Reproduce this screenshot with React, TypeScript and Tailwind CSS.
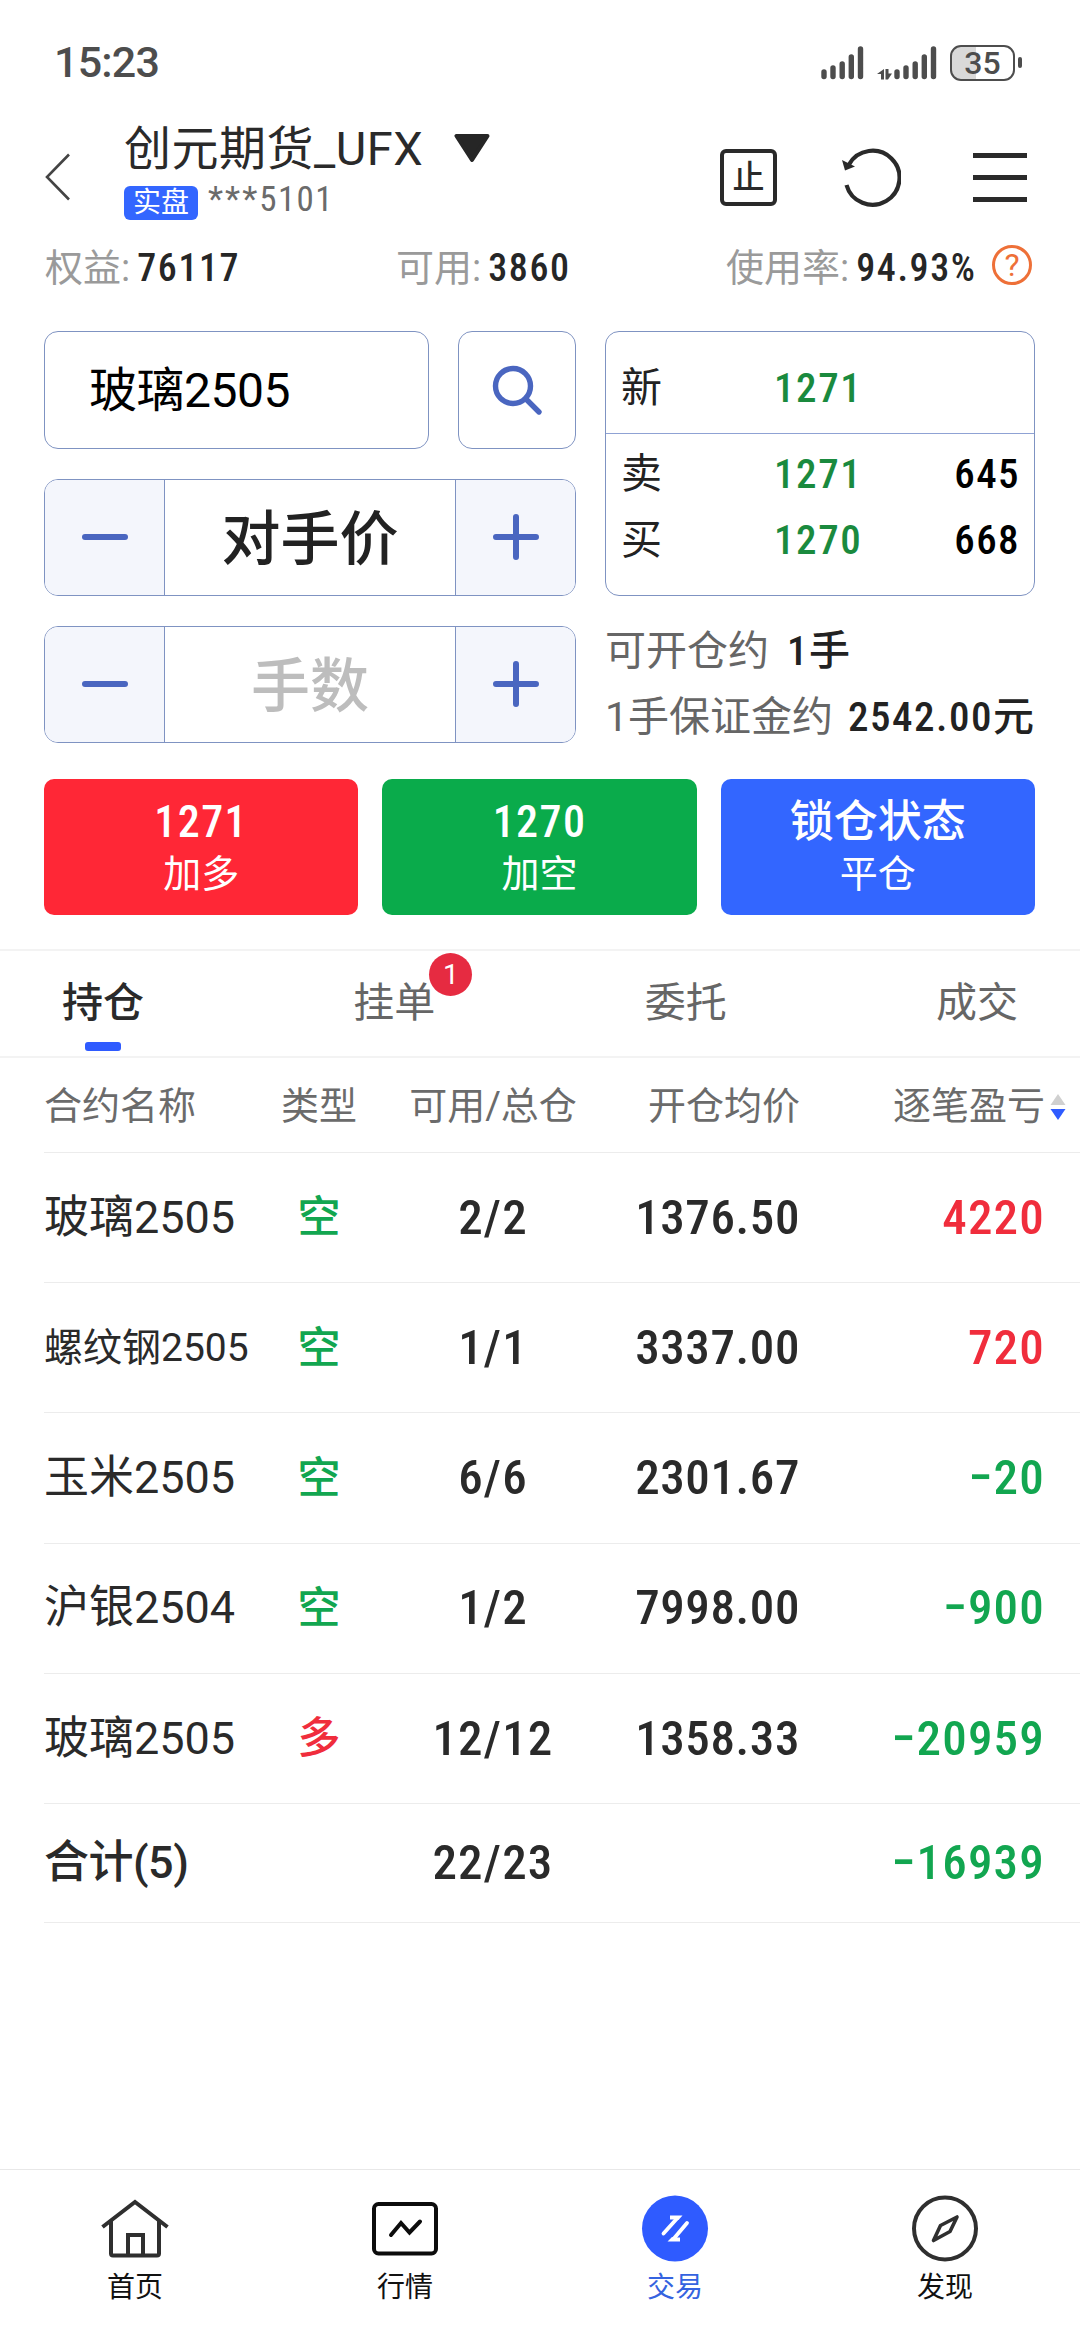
import React from 'react';
import clsx from 'clsx';

const positions = [
  { name: '玻璃2505', side: '空', volume: '2/2', price: '1376.50', profit: '4220' },
  { name: '螺纹钢2505', side: '空', volume: '1/1', price: '3337.00', profit: '720' },
  { name: '玉米2505', side: '空', volume: '6/6', price: '2301.67', profit: '−20' },
  { name: '沪银2504', side: '空', volume: '1/2', price: '7998.00', profit: '−900' },
  { name: '玻璃2505', side: '多', volume: '12/12', price: '1358.33', profit: '−20959' },
];

const tabs = [
  { label: '持仓', active: true },
  { label: '挂单', badge: 1 },
  { label: '委托' },
  { label: '成交' },
];

const rowGrid = 'grid grid-cols-[210px_130px_218px_198px_245px_35px] items-center ml-[44px]';
const cellNumber = 'font-medium font-stretch-condensed';

function Signal() {
  return (
    <svg width="43" height="36" viewBox="0 0 43 36" stroke="#4d4d4d" strokeWidth="5.4" strokeLinecap="round">
      <path d="M3 27v4.500M12 23v8.500M21.200 19v12.500M30.300 12v19.500M39.500 4v27.500" />
    </svg>
  );
}

function StatusBar() {
  return (
    <div className="flex h-[117px] items-center justify-between pt-[8px] pl-[54px] pr-[58px] text-[#4d4d4d]">
      <span className="text-[43px] font-medium tracking-[-0.8px]">15:23</span>
      <div className="flex items-center">
        <Signal />
        <svg className="ml-[13px]" width="17" height="36" viewBox="0 0 17 36" fill="#4d4d4d">
          <path d="M7 24v10.500h-3V29H0zM8.500 24h3v4.500H15L11 34.500H8.500z" />
        </svg>
        <Signal />
        <div className="relative ml-[13px] flex h-[36px] w-[65px] items-center justify-center overflow-hidden rounded-[11px] border-[2.5px] border-[#4d4d4d] bg-linear-to-r from-[#d9d9d9] from-40% to-white to-40%">
          <span className="text-[32px] leading-none font-medium">35</span>
        </div>
        <div className="ml-[3px] h-[11px] w-[4px] rounded-full bg-[#4d4d4d]" />
      </div>
    </div>
  );
}

function Header() {
  return (
    <div className="flex h-[120px] items-center pl-[45px] pr-[53px] text-[#2a2a2a]">
      <svg width="26" height="48" viewBox="0 0 26 48" fill="none" stroke="#444" strokeWidth="2.6">
        <path d="M24 1.500L2 24l22 22.500" />
      </svg>
      <div className="ml-[53px] self-start pt-[4px]">
        <div className="flex items-center">
          <span className="text-[47px] leading-[56px] tracking-[0.5px] whitespace-nowrap">创元期货_UFX</span>
          <svg className="mb-[2px] ml-[31px]" width="36" height="30" viewBox="0 0 36 30" fill="#262626" stroke="#262626" strokeWidth="4" strokeLinejoin="round">
            <path d="M2.500 3h31L18 27z" />
          </svg>
        </div>
        <div className="mt-[9px] flex items-center">
          <span className="flex h-[34px] w-[74px] items-center justify-center rounded-[6px] bg-[#3366ff] text-[28px] leading-none text-white">
            实盘
          </span>
          <span className="-mt-[7px] ml-[10px] text-[35px] leading-[34px] text-[#6b6b6b]">
            <span className="tracking-[2px]">***</span>
            <span className="tracking-[1.4px] font-stretch-condensed">5101</span>
          </span>
        </div>
      </div>
      <div className="ml-auto flex items-center">
        <div className="flex h-[57px] w-[57px] items-center justify-center rounded-[6px] border-4 border-[#2a2a2a] text-[32px] leading-none font-medium">
          止
        </div>
        <svg className="ml-[62px]" width="62" height="64" viewBox="0 0 62 64" fill="none" stroke="#2a2a2a" strokeWidth="4.200">
          <path d="M7.500 40A27 27 0 1 0 10 19.500" />
          <path d="M3 15l13 6.500-10 4z" fill="#2a2a2a" stroke="none" />
        </svg>
        <div className="ml-[72px] flex w-[54px] flex-col gap-[17px]">
          <div className="h-[5px] bg-[#2a2a2a]" />
          <div className="h-[5px] bg-[#2a2a2a]" />
          <div className="h-[5px] bg-[#2a2a2a]" />
        </div>
      </div>
    </div>
  );
}

function Stat({ label, value, className }: { label: string; value: string; className?: string }) {
  return (
    <div className={clsx('flex items-center', className)}>
      <span className="text-[#9a9a9a]">{label}:</span>
      <span className="ml-[7px] font-medium tracking-[1.6px] text-[#262626] font-stretch-condensed">{value}</span>
    </div>
  );
}

function AccountStats() {
  return (
    <div className="flex h-[60px] items-center pt-[2px] pl-[45px] text-[38px] leading-[58px]">
      <Stat label="权益" value="76117" className="w-[351px]" />
      <Stat label="可用" value="3860" className="w-[330px]" />
      <Stat label="使用率" value="94.93%" className="w-[256px]" />
      <div className="mb-[6px] ml-[10px] flex h-[40px] w-[40px] items-center justify-center rounded-full border-[3px] border-[#ee7038] text-[32px] leading-none text-[#ee7038]">
        ?
      </div>
    </div>
  );
}

function Minus() {
  return (
    <svg width="48" height="48" viewBox="0 0 48 48" stroke="#4a66c0" strokeWidth="6" strokeLinecap="round">
      <path d="M4 24h40" />
    </svg>
  );
}

function Plus() {
  return (
    <svg width="48" height="48" viewBox="0 0 48 48" stroke="#4a66c0" strokeWidth="6" strokeLinecap="round">
      <path d="M4 24h40M24 4v40" />
    </svg>
  );
}

function Stepper({ text, placeholder }: { text: string; placeholder?: boolean }) {
  return (
    <div className="flex h-[118px] overflow-hidden rounded-[14px] border border-[#7f93c2]">
      <button className="flex w-[120px] items-center justify-center border-r border-[#7f93c2] bg-[#f4f6fc]">
        <Minus />
      </button>
      <div
        className={clsx(
          'flex flex-1 items-center justify-center pt-[4px] text-[59px] leading-none font-medium',
          placeholder ? 'text-[#bdbdbd]' : 'text-[#222]'
        )}
      >
        {text}
      </div>
      <button className="flex w-[120px] items-center justify-center border-l border-[#7f93c2] bg-[#f4f6fc]">
        <Plus />
      </button>
    </div>
  );
}

function QuoteRow({ label, price, volume }: { label: string; price: string; volume?: string }) {
  return (
    <div className="flex h-[66px] items-center pr-[14px] pl-[15px] text-[41px] leading-[66px]">
      <span className="w-[153px] text-[#222]">{label}</span>
      <span className="font-medium tracking-[1.6px] text-[#1a8a3e] font-stretch-condensed">{price}</span>
      <span className="ml-auto font-medium tracking-[1.4px] text-black font-stretch-condensed">{volume}</span>
    </div>
  );
}

function OrderForm() {
  return (
    <div className="mt-[34px] flex h-[412px] gap-[29px] pr-[45px] pl-[44px]">
      <div className="flex w-[532px] flex-col gap-[29.5px]">
        <div className="flex gap-[29px]">
          <div className="flex h-[118px] w-[385px] items-center rounded-[14px] border border-[#7f93c2] pt-[1px] pl-[44px] text-[48px] tracking-[-0.5px] text-black">
            玻璃2505
          </div>
          <button className="flex h-[118px] w-[118px] items-center justify-center rounded-[14px] border border-[#7f93c2]">
            <svg width="52" height="52" viewBox="0 0 52 52" fill="none" stroke="#4a66c0" strokeWidth="5.400" strokeLinecap="round">
              <circle cx="22" cy="22" r="17.500" />
              <path d="M35 35l13 13" />
            </svg>
          </button>
        </div>
        <Stepper text="对手价" />
        <Stepper text="手数" placeholder />
      </div>
      <div className="flex-1">
        <div className="h-[265px] rounded-[14px] border border-[#7f93c2]">
          <div className="flex h-[102px] flex-col justify-end border-b border-[#8fa2d4] pb-[12px]">
            <QuoteRow label="新" price="1271" />
          </div>
          <div className="pt-[7px]">
            <QuoteRow label="卖" price="1271" volume="645" />
            <QuoteRow label="买" price="1270" volume="668" />
          </div>
        </div>
        <div className="mt-[22px] text-[41px] leading-[66px] whitespace-nowrap text-[#666]">
          <p>
            可开仓约
            <span className="ml-[18px] font-medium tracking-[1.4px] text-[#222] font-stretch-condensed">1手</span>
          </p>
          <p>
            1手保证金约
            <span className="ml-[15px] font-medium tracking-[1.5px] text-[#222] font-stretch-condensed">2542.00</span>
            <span className="font-medium text-[#222]">元</span>
          </p>
        </div>
      </div>
    </div>
  );
}

function ActionButton({ title, action, className }: { title: string; action: string; className: string }) {
  return (
    <button className={clsx('h-[136px] rounded-[10px] text-white', className)}>
      <div
        className={clsx(
          'pt-[1px] text-[44px] leading-[50px] font-medium',
          /^\d+$/.test(title) && 'tracking-[1.4px] font-stretch-condensed'
        )}
      >
        {title}
      </div>
      <div className="mt-[2px] text-[38px] leading-[50px]">{action}</div>
    </button>
  );
}

function Tabs() {
  return (
    <div className="mt-[34px] flex h-[109px] justify-between border-y-2 border-[#f3f3f3] px-[62px]">
      {tabs.map((tab) => (
        <div
          key={tab.label}
          className={clsx(
            'relative text-[41px] leading-[105px]',
            tab.active ? 'font-medium text-[#2a2a2a]' : 'text-[#666]'
          )}
        >
          {tab.label}
          {tab.active && (
            <div className="absolute bottom-[5px] left-[23px] h-[9px] w-[36px] rounded-[3px] bg-[#2f5bff]" />
          )}
          {tab.badge && (
            <span className="absolute top-[2px] left-[76px] flex h-[43px] w-[43px] items-center justify-center rounded-full bg-[#e62b41] text-[28px] leading-none text-white">
              {tab.badge}
            </span>
          )}
        </div>
      ))}
    </div>
  );
}

function PositionTable() {
  return (
    <div className="text-[#2a2a2a]">
      <div className={clsx(rowGrid, 'h-[95px] border-b border-[#ececec] pt-[3px] text-[38px] whitespace-nowrap text-[#6b6b6b]')}>
        <span>合约名称</span>
        <span className="text-center">类型</span>
        <span className="text-center">可用/总仓</span>
        <span className="text-right">开仓均价</span>
        <span className="text-right">逐笔盈亏</span>
        <svg className="ml-[5px]" width="16" height="26" viewBox="0 0 16 26">
          <path d="M8 0l7.500 11H.5z" fill="#d0d0d0" />
          <path d="M8 26l7.500-11H.5z" fill="#2f5bff" />
        </svg>
      </div>
      {positions.map((p, i) => (
        <div key={i} className={clsx(rowGrid, 'h-[130.2px] border-b border-[#ececec] text-[49px]')}>
          <span className={clsx('whitespace-nowrap', p.name.length > 6 ? 'text-[39px]' : 'text-[45px]')}>{p.name}</span>
          <span
            className={clsx('text-center text-[43px] font-medium', p.side === '多' ? 'text-[#f02d3c]' : 'text-[#12a650]')}
          >
            {p.side}
          </span>
          <span className={clsx('text-center tracking-[1.2px]', cellNumber)}>{p.volume}</span>
          <span className={clsx('text-right tracking-[0.6px]', cellNumber)}>{p.price}</span>
          <span
            className={clsx(
              'text-right tracking-[1.2px]',
              cellNumber,
              p.profit.startsWith('−') ? 'text-[#12a650]' : 'text-[#f02d3c]'
            )}
          >
            {p.profit}
          </span>
        </div>
      ))}
      <div className={clsx(rowGrid, 'h-[119px] border-b border-[#ececec] text-[49px]')}>
        <span className="text-[45px] font-medium tracking-[-0.5px]">合计(5)</span>
        <span />
        <span className={clsx('text-center tracking-[1.2px]', cellNumber)}>22/23</span>
        <span />
        <span className={clsx('text-right tracking-[1.2px] text-[#12a650]', cellNumber)}>−16939</span>
      </div>
    </div>
  );
}

function NavItem({ label, active, children }: { label: string; active?: boolean; children: React.ReactNode }) {
  return (
    <div className="flex flex-col items-center">
      <svg width="68" height="68" viewBox="0 0 68 68" fill="none">
        {children}
      </svg>
      <span className={clsx('mt-[5px] text-[28px] leading-[40px]', active ? 'text-[#3563e0]' : 'text-[#111]')}>
        {label}
      </span>
    </div>
  );
}

function BottomNav() {
  return (
    <div className="mt-auto grid h-[162px] grid-cols-4 border-t border-[#e8e8e8] pt-[25px]">
      <NavItem label="首页">
        <g stroke="#2f2f2f" strokeWidth="4" strokeLinejoin="round">
          <path d="M1.500 32L34 7l32.500 25" strokeLinejoin="miter" />
          <path d="M10 26v32.500a2 2 0 0 0 2 2h44a2 2 0 0 0 2-2V26" />
          <path d="M27 60V40h15v20" strokeLinejoin="miter" />
        </g>
      </NavItem>
      <NavItem label="行情">
        <rect x="3" y="9" width="62" height="49.500" rx="4.500" stroke="#0c0c0c" strokeWidth="4" />
        <path d="M20 40l10-12 8.500 9.500L49 26.500" stroke="#0c0c0c" strokeWidth="4" strokeLinecap="round" />
      </NavItem>
      <NavItem label="交易" active>
        <circle cx="34" cy="33.500" r="33" fill="#2f5bff" />
        <path d="M22.500 38.500L36 23.500M46 28L32.500 44" stroke="#fff" strokeWidth="3.800" strokeLinecap="round" />
        <path d="M29 20.500h12.500L37.500 25 35 24.500h-6zM39 46.500H26.500L31 42l2 .5h6z" fill="#fff" />
      </NavItem>
      <NavItem label="发现">
        <circle cx="34" cy="33.500" r="31" stroke="#2f2f2f" strokeWidth="4" />
        <path d="M46 22l-7 14.500-16.500 9 7-15z" stroke="#2f2f2f" strokeWidth="3.600" strokeLinejoin="round" />
      </NavItem>
    </div>
  );
}

export default function App() {
  return (
    <div className="flex h-[2331px] w-[1080px] flex-col overflow-hidden bg-white font-[Roboto,'Noto_Sans_CJK_SC',sans-serif]">
      <StatusBar />
      <Header />
      <AccountStats />
      <OrderForm />
      <div className="mt-[36px] grid grid-cols-3 gap-[24px] pr-[45px] pl-[44px]">
        <ActionButton title="1271" action="加多" className="bg-[#ff2736]" />
        <ActionButton title="1270" action="加空" className="bg-[#0aab4b]" />
        <ActionButton title="锁仓状态" action="平仓" className="bg-[#3366ff]" />
      </div>
      <Tabs />
      <PositionTable />
      <BottomNav />
    </div>
  );
}
